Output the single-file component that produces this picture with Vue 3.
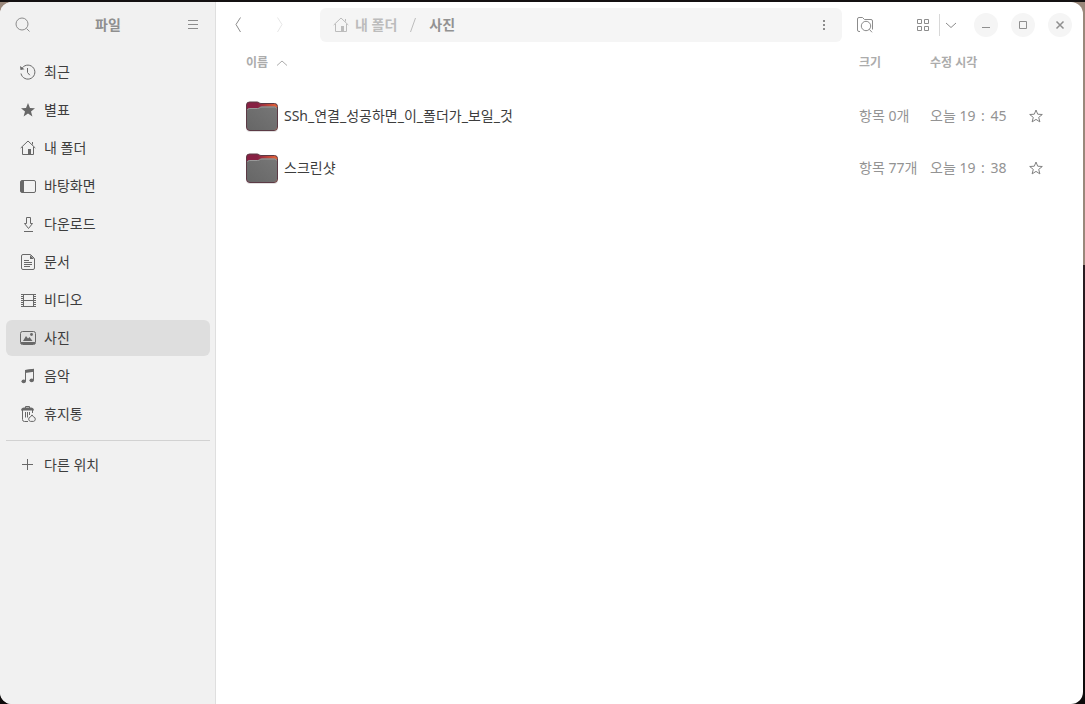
<script setup>
import { ref } from 'vue'

const places = [
  { id: 'recent', label: '최근' },
  { id: 'starred', label: '별표' },
  { id: 'home', label: '내 폴더' },
  { id: 'desktop', label: '바탕화면' },
  { id: 'download', label: '다운로드' },
  { id: 'document', label: '문서' },
  { id: 'video', label: '비디오' },
  { id: 'picture', label: '사진' },
  { id: 'music', label: '음악' },
  { id: 'trash', label: '휴지통' },
]
const current = ref('picture')

const files = [
  { name: 'SSh_연결_성공하면_이_폴더가_보일_것', size: '항목 0개', day: '오늘 19', minute: '45' },
  { name: '스크린샷', size: '항목 77개', day: '오늘 19', minute: '38' },
]
</script>

<template>
  <div class="desktop">
    <div class="window">
      <aside class="sidebar">
        <header class="side-head">
          <button class="tool" aria-label="검색">
            <svg class="icon" viewBox="0 0 16 16"><circle cx="7" cy="7" r="6" /><path d="M11.500 11.500l3 3" /></svg>
          </button>
          <h1>파일</h1>
          <button class="tool" aria-label="주 메뉴">
            <svg class="icon" viewBox="0 0 16 16"><path d="M3 3.500h10M3 7.500h10M3 11.500h10" /></svg>
          </button>
        </header>
        <nav class="places">
          <a
            v-for="p in places"
            :key="p.id"
            href="#"
            class="place"
            :class="{ active: p.id === current }"
            @click.prevent="current = p.id"
          >
            <svg class="icon" viewBox="0 0 16 16">
              <g v-if="p.id === 'recent'">
                <path d="M1.500 5.200A7 7 0 1 1 1 9.500M7.500 4v4.500l2.300 2.700" />
                <path class="fill" d="M0 2l.500 4 4-.800z" />
              </g>
              <path v-else-if="p.id === 'starred'" class="fill" d="M8 1l2 5 5 .200-4 3.200 1.400 5L8 11.600l-4.400 2.800 1.400-5-4-3.200L6 6z" />
              <g v-else-if="p.id === 'home'">
                <path d="M.7 8L8 1l7.300 7M2.500 7v7.500h11V7M12.500 4.500V2" />
                <path class="fill" d="M8 9h3v5H8z" />
              </g>
              <g v-else-if="p.id === 'desktop'">
                <rect x=".5" y="2.500" width="15" height="12" rx="1.500" />
                <path class="fill" d="M1 3h3v11H1z" />
              </g>
              <path v-else-if="p.id === 'download'" d="M6.500 1.500h4v6h2l-4 5-4-5h2zM4 15.500h9" />
              <g v-else-if="p.id === 'document'">
                <path d="M3 .500h7.500l4 4V14a1.500 1.500 0 0 1-1.500 1.500H3A1.500 1.500 0 0 1 1.500 14V2A1.500 1.500 0 0 1 3 .500zM4 6.500h5M4 8.500h8M4 10.500h8M4 12.500h6" />
                <path class="fill" d="M10 1l4 4h-4z" />
              </g>
              <g v-else-if="p.id === 'video'">
                <path d="M3.500 2v12M13.500 2v12M1 2.500h15M3 8.500h11M1 14.500h15" />
                <path class="perf" d="M2 2v13M15 2v13" />
              </g>
              <g v-else-if="p.id === 'picture'">
                <rect x=".5" y="1.500" width="15" height="13" rx="2" />
                <path class="fill" d="M1 12h14v2H1zM3 11l3-5 2 2.500L9.500 7l3 4z" />
                <circle class="fill" cx="11.500" cy="4.500" r="1.400" />
              </g>
              <g v-else-if="p.id === 'music'">
                <path d="M5.500 13V2.500l8-1V12" />
                <path class="fill" d="M5 2l9-1.300v3L5 5z" />
                <ellipse class="fill" cx="3.700" cy="13.300" rx="2.200" ry="1.900" />
                <ellipse class="fill" cx="11.700" cy="12.300" rx="2.200" ry="1.900" />
              </g>
              <g v-else>
                <path d="M5.500 2V.500h4V2M2.500 4v9.500a2 2 0 0 0 2 2H8M12.500 4v3M5.500 6v5.500M7.500 6v5.500M9.500 6v3" />
                <path class="fill" d="M1 4.500c0-2 1.500-3 3-3h7c1.500 0 3 1 3 3z" />
                <path d="M10.500 15.400a2.300 2.300 0 0 1 0-4.500l1.500-2 1.500 2a2.300 2.300 0 0 1 0 4.500z" />
              </g>
            </svg>
            <span>{{ p.label }}</span>
          </a>
          <hr />
          <a href="#" class="place" @click.prevent>
            <svg class="icon" viewBox="0 0 16 16"><path d="M7.500 2v11M2 7.500h11" /></svg>
            <span>다른 위치</span>
          </a>
        </nav>
      </aside>

      <main class="main">
        <header class="toolbar">
          <button class="tool" aria-label="뒤로">
            <svg class="icon" viewBox="0 0 16 16"><path d="M9.500 .500l-4.500 7 4.500 7.500" /></svg>
          </button>
          <button class="tool forward" aria-label="앞으로" disabled>
            <svg class="icon" viewBox="0 0 16 16"><path d="M6.500 .500l4.500 7-4.500 7.500" /></svg>
          </button>
          <div class="pathbar">
            <a href="#" class="crumb parent" @click.prevent>
              <svg class="icon" viewBox="0 0 16 16">
                <path d="M.7 8L8 1l7.300 7M2.500 7v7.500h11V7M12.500 4.500V2" />
                <path class="fill" d="M8 9h3v5H8z" />
              </svg>
              <span>내 폴더</span>
            </a>
            <svg class="slash" viewBox="0 0 8 16"><path d="M6.500 1l-5 14" /></svg>
            <a href="#" class="crumb" @click.prevent>사진</a>
            <button class="tool more" aria-label="현재 폴더 메뉴">
              <svg class="icon" viewBox="0 0 16 16"><path class="fill" d="M6 3h2v2H6zM6 7h2v2H6zM6 11h2v2H6z" /></svg>
            </button>
          </div>
          <button class="tool find" aria-label="폴더 검색">
            <svg class="icon wide" viewBox="0 0 18 16">
              <path d="M4 14.500H3A1.500 1.500 0 0 1 1.500 13V2A1.500 1.500 0 0 1 3 .500h3.500l2 2H15A1.500 1.500 0 0 1 16.500 4v8.500" />
              <circle cx="10" cy="9" r="4.700" /><path d="M13.300 12.300l2.700 3" />
            </svg>
          </button>
          <div class="view">
            <button class="tool" aria-label="격자 보기">
              <svg class="icon" viewBox="0 0 16 16"><path d="M2.500 2.500h4v4h-4zM9.500 2.500h4v4h-4zM2.500 9.500h4v4h-4zM9.500 9.500h4v4h-4z" /></svg>
            </button>
            <button class="tool options" aria-label="보기 옵션">
              <svg class="icon" viewBox="0 0 16 16"><path d="M3 6l5 4.500L13 6" /></svg>
            </button>
          </div>
          <div class="controls">
            <button aria-label="최소화"><svg class="icon" viewBox="0 0 16 16"><path d="M4 10.500h8" /></svg></button>
            <button aria-label="최대화"><svg class="icon" viewBox="0 0 16 16"><path d="M4.500 4.500h7v7h-7z" /></svg></button>
            <button aria-label="닫기"><svg class="icon" viewBox="0 0 16 16"><path class="cross" d="M4.500 4.500l7 7M11.500 4.500l-7 7" /></svg></button>
          </div>
        </header>

        <table>
          <thead>
            <tr>
              <th>
                <button class="sort">이름
                  <svg class="icon" viewBox="0 0 16 16"><path d="M3 10.500L8 6l5 4.500" /></svg>
                </button>
              </th>
              <th class="size"><button class="sort">크기</button></th>
              <th class="date"><button class="sort">수정 시각</button></th>
              <th class="star"></th>
            </tr>
          </thead>
          <tbody>
            <tr v-for="f in files" :key="f.name">
              <td>
                <div class="file">
                  <svg class="folder" viewBox="0 0 32 32">
                    <defs>
                      <linearGradient id="back" x1="0" x2="1">
                        <stop offset=".35" stop-color="#872043" /><stop offset="1" stop-color="#ea6534" />
                      </linearGradient>
                      <linearGradient id="front" x1="0" y1="1" x2="1" y2="0">
                        <stop offset="0" stop-color="#666" /><stop offset="1" stop-color="#777" />
                      </linearGradient>
                    </defs>
                    <rect class="shadow" x="0" y="6" width="32" height="26" rx="4" />
                    <path class="back" d="M.500 27V5a3 3 0 0 1 3-3h7.500c2 0 2 1.500 4 1.500h13.500a3 3 0 0 1 3 3V27a3.500 3.500 0 0 1-3.500 3.500H4A3.500 3.500 0 0 1 .500 27z" />
                    <path class="front" d="M1 10.500A2.500 2.500 0 0 1 3.500 8h8c2.500 0 2-1.500 4.500-1.500h12.500A2.500 2.500 0 0 1 31 9V27a3 3 0 0 1-3 3H4a3 3 0 0 1-3-3z" />
                    <path class="shine" d="M1.500 10a2.200 2.200 0 0 1 2-1.500h8c2.500 0 2-1.500 4.500-1.500h12.500a2.200 2.200 0 0 1 2 1.500" />
                  </svg>
                  <span>{{ f.name }}</span>
                </div>
              </td>
              <td class="meta">{{ f.size }}</td>
              <td class="meta"><time>{{ f.day }}<span class="colon">:</span>{{ f.minute }}</time></td>
              <td class="star">
                <button aria-label="별표 표시">
                  <svg class="icon" viewBox="0 0 16 16"><path d="M8 2l1.700 4.200 4.600.3-3.600 2.900 1.200 4.500L8 11.400l-3.900 2.500 1.200-4.500-3.600-2.900 4.600-.3z" /></svg>
                </button>
              </td>
            </tr>
          </tbody>
        </table>
      </main>
    </div>
  </div>
</template>

<style>
body {
  background: linear-gradient(#9a887b 265px, #2b1d22 265px, #0d0a0a 100%);
}
</style>

<style scoped>
.desktop {
  box-sizing: border-box;
  min-height: 100vh;
  display: flex;
  padding-right: 2px;
  border-top: 2px solid #141112;
  font: 14px/20px "Noto Sans", "Noto Sans CJK KR", sans-serif;
  color: #3d3d3d;
}
.window {
  flex: 1;
  display: flex;
  min-width: 0;
  overflow: hidden;
  border-radius: 12px;
  background: #fff;
}
button {
  display: flex;
  align-items: center;
  justify-content: center;
  padding: 0;
  border: 0;
  background: none;
  font: inherit;
  color: inherit;
}
a {
  color: inherit;
  text-decoration: none;
}
.icon {
  flex: none;
  display: block;
  width: 16px;
  height: 16px;
  fill: none;
  stroke: currentColor;
}
.icon.wide {
  width: 18px;
}
.icon .fill {
  fill: currentColor;
  stroke: none;
}
.icon .perf {
  stroke-width: 2;
  stroke-dasharray: 1 1;
}
.icon .cross {
  stroke-width: 1.5;
}
.tool {
  flex: none;
  width: 34px;
  height: 34px;
  color: #8c8c8c;
}
.sidebar {
  box-sizing: border-box;
  flex: none;
  width: 216px;
  border-right: 1px solid #dfdfdf;
  background: #f1f1f1;
}
.side-head {
  display: flex;
  align-items: center;
  justify-content: space-between;
  height: 46px;
  padding: 0 5px 0 6px;
}
h1 {
  margin: 0;
  font-size: 14px;
  font-weight: 700;
  color: #8f8f8f;
}
.places {
  display: flex;
  flex-direction: column;
  gap: 2px;
  padding: 6px 5px 6px 6px;
}
.place {
  display: flex;
  align-items: center;
  gap: 8px;
  height: 36px;
  padding: 0 14px;
  border-radius: 6px;
}
.place .icon {
  color: #686868;
}
.place.active {
  background: #dedede;
}
hr {
  width: 100%;
  height: 1px;
  margin: 6px 0 4px;
  border: 0;
  background: #d2d2d2;
}
.main {
  flex: 1;
  min-width: 0;
}
.toolbar {
  display: flex;
  align-items: center;
  height: 46px;
  padding: 0 11px 0 6px;
}
.forward {
  margin-left: 6px;
  color: #e6e6e6;
}
.pathbar {
  flex: 1;
  display: flex;
  align-items: center;
  height: 34px;
  margin-left: 24px;
  padding-left: 13px;
  border-radius: 6px;
  background: #f5f5f5;
  font-weight: 700;
  color: #929292;
}
.crumb {
  display: flex;
  align-items: center;
  gap: 6px;
}
.parent {
  color: #bcbcbc;
}
.slash {
  width: 8px;
  height: 16px;
  margin: 0 12px;
  fill: none;
  stroke: #bcbcbc;
}
.more {
  margin-left: auto;
}
.find {
  margin-left: 6px;
}
.view {
  display: flex;
  align-items: center;
  margin-left: 24px;
}
.view .options {
  width: 22px;
  height: 22px;
  border-left: 1px solid #d8d8d8;
}
.view .tool:first-child {
  width: 33px;
}
.controls {
  display: flex;
  gap: 13px;
  margin-left: 13px;
}
.controls button {
  width: 24px;
  height: 24px;
  border-radius: 50%;
  background: #f5f5f5;
  color: #8f8f8f;
}
table {
  width: 100%;
  table-layout: fixed;
  border-collapse: collapse;
}
th,
td {
  padding: 0;
  text-align: left;
}
th {
  height: 42px;
  vertical-align: top;
}
th:first-child,
td:first-child {
  padding-left: 30px;
}
.sort {
  gap: 6px;
  height: 30px;
  font-size: 12px;
  font-weight: 700;
  color: #acacac;
}
th.size {
  width: 71px;
}
th.date {
  width: 98px;
}
th.star {
  width: 55px;
}
td {
  height: 52px;
}
.file {
  display: flex;
  align-items: center;
  gap: 6px;
}
.folder {
  flex: none;
  width: 32px;
  height: 32px;
}
.folder .shadow {
  fill: #000;
  opacity: 0.12;
}
.folder .back {
  fill: url(#back);
  stroke: #5b3a45;
}
.folder .front {
  fill: url(#front);
}
.folder .shine {
  fill: none;
  stroke: #999;
}
.meta {
  color: #939393;
  white-space: nowrap;
}
.colon {
  display: inline-block;
  width: 15px;
  text-align: center;
}
.star button {
  color: #808080;
}
</style>
